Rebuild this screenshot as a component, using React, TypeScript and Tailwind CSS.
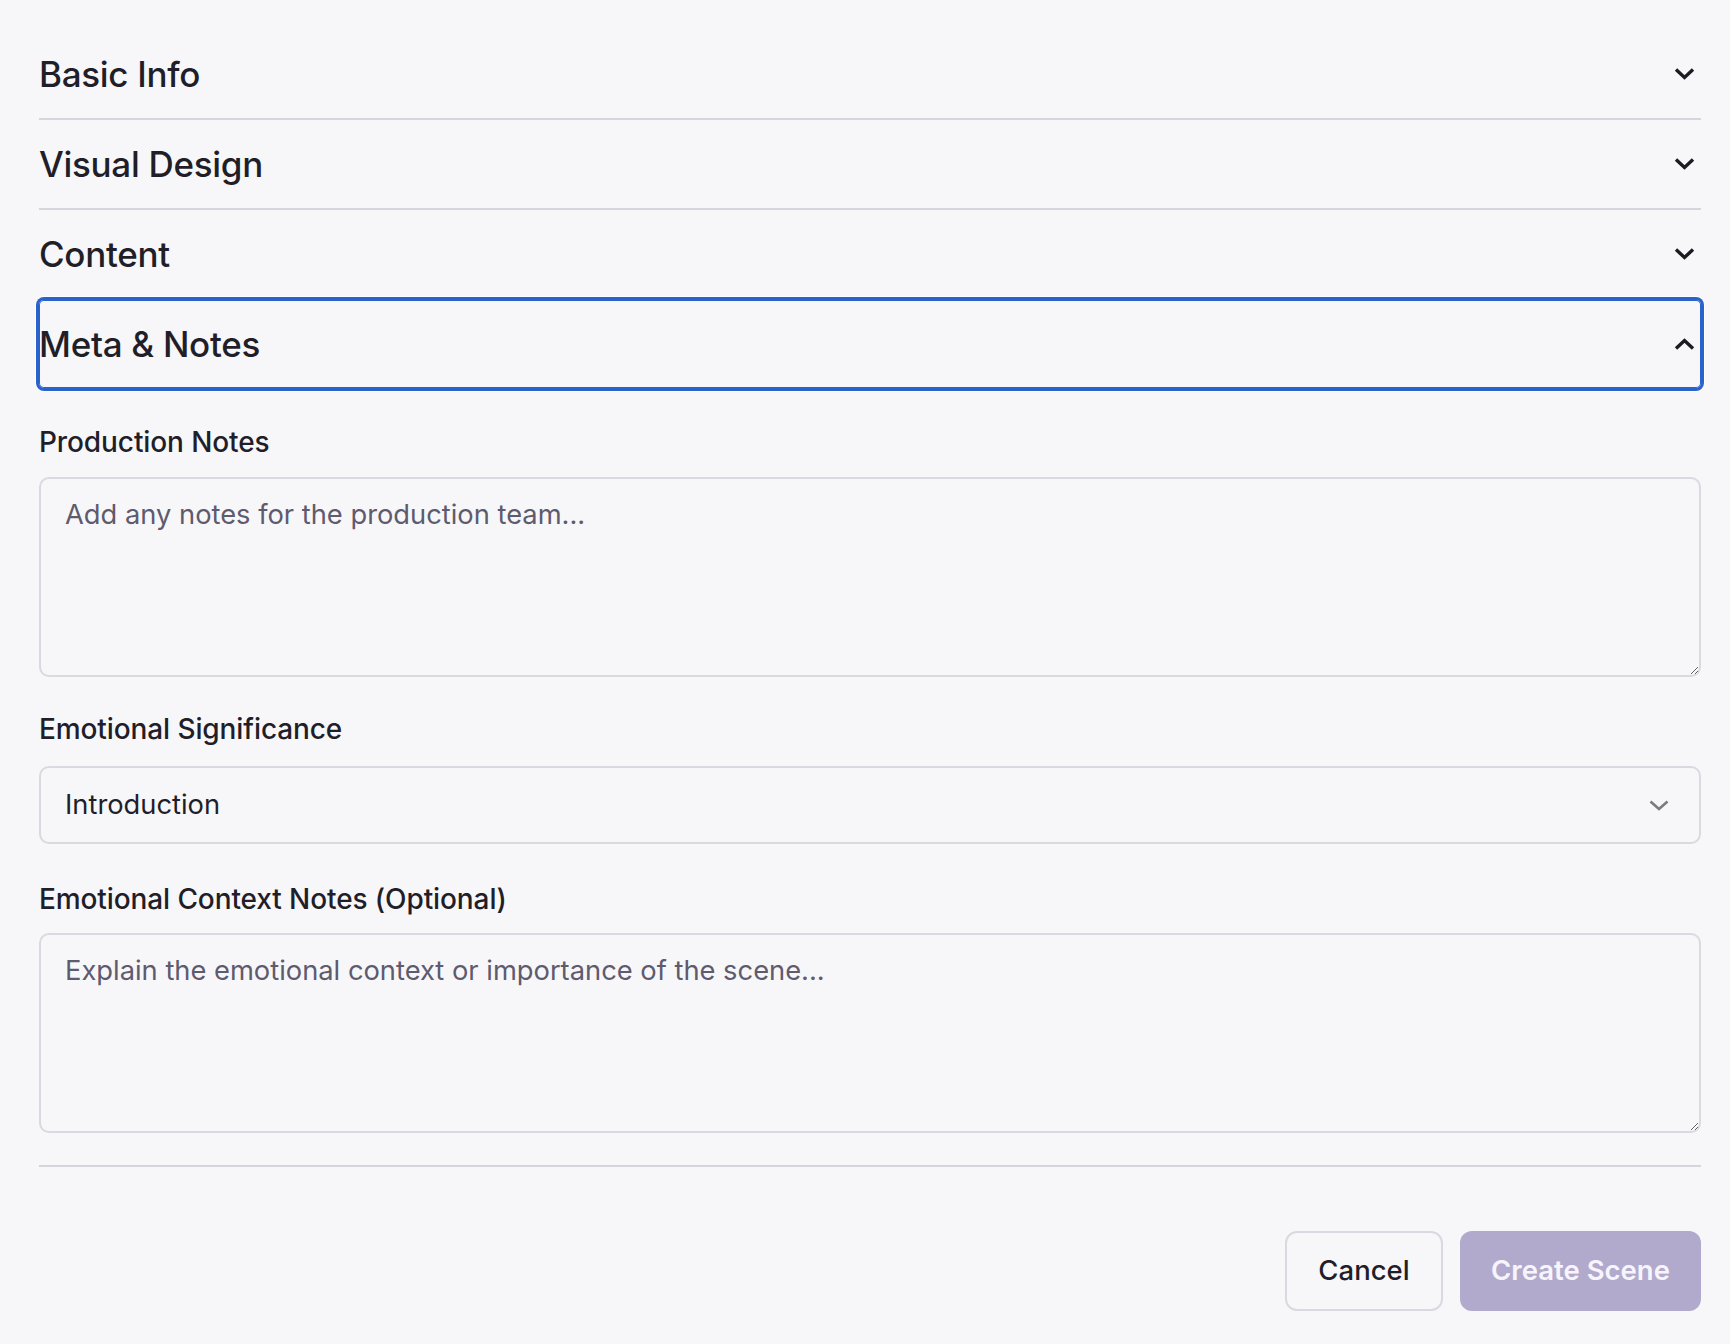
import { useState } from "react"

const sections = ["Basic Info", "Visual Design", "Content", "Meta & Notes"]

function Chevron({ up = false }: { up?: boolean }) {
  return (
    <svg width="21" height="12" viewBox="0 0 21 12" fill="none" className="mr-[6px] shrink-0">
      <path
        d={up ? "M2 10.5 L10.5 2.5 L19 10.5" : "M2 1.5 L10.5 9.5 L19 1.5"}
        stroke="#1c1b24"
        strokeWidth="3.4"
        strokeLinejoin="miter"
      />
    </svg>
  )
}

export default function App() {
  const [open] = useState("Meta & Notes")

  return (
    <div className="min-h-[1344px] bg-[#f7f7f9] pl-[39px] pr-[29px] pt-[30px] pb-[32px] font-['Inter','Noto_Sans',sans-serif] text-[#1f1e29]">
      {/* Accordion headers */}
      {sections.map((s) => (
        <div key={s} className="border-b-2 border-[#d6d5de]">
          <button
            className={
              "flex h-[88px] w-full items-center justify-between text-left text-[35px] font-medium tracking-[-0.3px] " +
              (s === open
                ? "rounded-[5px] shadow-[0_0_0_3px_#2a62cb,0_0_0_4px_#ffffff,inset_0_0_0_1px_#2a62cb]"
                : "")
            }
          >
            <span>{s}</span>
            <Chevron up={s === open} />
          </button>
        </div>
      ))}

      {/* Meta & Notes content */}
      <div className="pt-[32px]">
        <label className="block text-[28px] leading-[40px] font-medium tracking-[-0.1px] mb-[15px]">Production Notes</label>
        <textarea
          className="block h-[200px] w-full rounded-[10px] border-2 border-[#dad9e1] bg-transparent px-6 pt-4 text-[27.3px] leading-[40px] text-[#1f1e29] outline-none placeholder:text-[#5e5b6f]"
          placeholder="Add any notes for the production team..."
        />

        <label className="mt-[32px] block text-[28px] leading-[40px] font-medium tracking-[-0.1px] mb-[17px]">Emotional Significance</label>
        <div className="flex h-[78px] w-full items-center justify-between rounded-[10px] border-2 border-[#dad9e1] pl-6 pr-[30px] text-[27.3px]">
          <span>Introduction</span>
          <svg width="20" height="11" viewBox="0 0 20 11" fill="none">
            <path d="M1.5 1.5 L10 9 L18.5 1.5" stroke="#7c7c80" strokeWidth="2.6" />
          </svg>
        </div>

        <label className="mt-[35px] block text-[28px] leading-[40px] font-medium tracking-[-0.1px] mb-[14px]">
          Emotional Context Notes (Optional)
        </label>
        <textarea
          className="block h-[200px] w-full rounded-[10px] border-2 border-[#dad9e1] bg-transparent px-6 pt-4 text-[27.3px] leading-[40px] text-[#1f1e29] outline-none placeholder:text-[#5e5b6f]"
          placeholder="Explain the emotional context or importance of the scene..."
        />
      </div>

      <div className="mt-[32px] border-t-2 border-[#d6d5de]" />

      <div className="mt-[64px] flex justify-end gap-[17px]">
        <button className="h-[80px] w-[158px] rounded-[12px] border-2 border-[#dad9e1] text-[27.5px] font-medium">
          Cancel
        </button>
        <button className="h-[80px] w-[241px] rounded-[12px] bg-[#b1aacd] text-[27.5px] font-semibold text-[#f7f5fb]">
          Create Scene
        </button>
      </div>
    </div>
  )
}
